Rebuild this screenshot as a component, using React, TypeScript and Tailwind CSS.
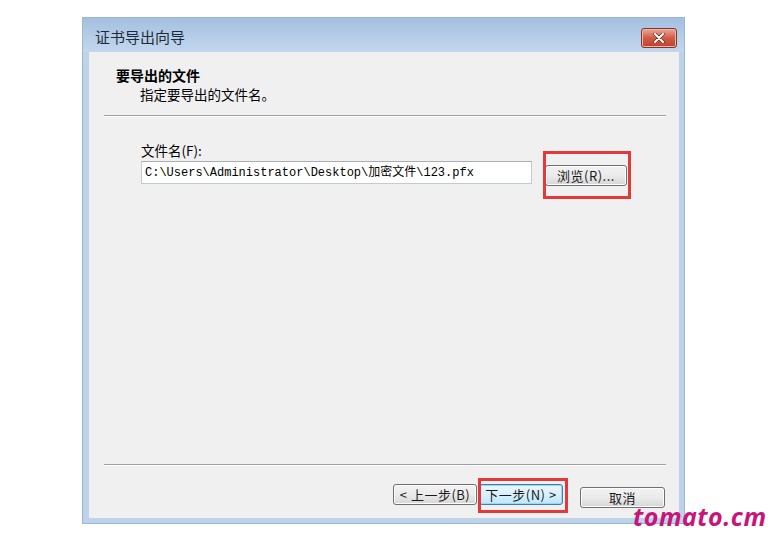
import React from "react";

const ui = { fontFamily: '"Noto Sans CJK SC", "Noto Sans", sans-serif' };
const mono = { fontFamily: '"Liberation Mono", "Noto Sans CJK SC", monospace' };

function WinButton({
  label,
  width,
  focused,
}: {
  label: string;
  width: string;
  focused?: boolean;
}) {
  return (
    <button
      className={`${width} h-[21px] whitespace-nowrap rounded-[3px] border text-[13px] leading-none tracking-[0.5px] text-[#1a1a1a] ${
        focused
          ? "border-[#3c7fb1] bg-gradient-to-b from-[#eaf6fd] via-[#d9f0fc] to-[#bee6fd] shadow-[inset_0_0_0_1px_#9fd5f5]"
          : "border-[#707070] bg-gradient-to-b from-[#f2f2f2] via-[#ebebeb] to-[#d6d6d6] shadow-[inset_0_0_0_1px_#fcfcfc]"
      }`}
      style={ui}
    >
      {label}
    </button>
  );
}

function Separator() {
  return (
    <div className="ml-[15px] mr-[13px] flex flex-col">
      <div className="h-px bg-[#a0a0a0]" />
      <div className="h-px bg-white" />
    </div>
  );
}

export default function App() {
  return (
    <div className="relative h-[542px] w-[768px] overflow-hidden bg-white">
      {/* WINDOW */}
      <div className="ml-[83px] mt-[18px] flex h-[505px] w-[601px] flex-col bg-[#bcd3ea] shadow-[0_0_0_1px_#9db6d2]">
        {/* TITLE BAR */}
        <div className="relative flex h-[34px] items-center bg-gradient-to-b from-[#a3bedf] via-[#b4cce7] to-[#c3d7ee] pl-[12px] pt-[4px]">
          <span className="text-[15px] text-[#1e2a3a]" style={ui}>
            证书导出向导
          </span>
          <div className="absolute left-[558px] top-[10px] flex h-[20px] w-[36px] items-center justify-center rounded-[3px] border border-[#80362c] bg-gradient-to-b from-[#e9a797] via-[#d05b46] to-[#c13f2a] shadow-[inset_0_0_0_1px_#eeb5a8]">
            <svg width="12" height="10" viewBox="0 0 12 10">
              <path d="M2 1 L10 9 M10 1 L2 9" stroke="#5a2a22" strokeWidth="3.2" strokeLinecap="round" />
              <path d="M2 1 L10 9 M10 1 L2 9" stroke="#ffffff" strokeWidth="2" strokeLinecap="round" />
            </svg>
          </div>
        </div>

        {/* CONTENT */}
        <div className="ml-[6px] mr-[5px] mb-[5px] flex flex-1 flex-col bg-[#f0f0f0]" style={ui}>
          {/* HEADER */}
          <div className="pl-[27px] pt-[14px]">
            <div className="text-[14px] font-bold leading-[19px] text-black">要导出的文件</div>
            <div className="pl-[24px] text-[13.5px] leading-[19px] text-black">指定要导出的文件名。</div>
          </div>
          <div className="mt-[11px]">
            <Separator />
          </div>

          {/* FILE FIELD */}
          <div className="ml-[52px] mt-[24px] text-[13.5px] leading-[18px] text-black">文件名(F):</div>
          <div className="ml-[52px] mt-[2px] flex items-start gap-[13px]">
            <div className="flex h-[23px] w-[391px] items-center border border-[#c5c9d0] border-t-[#abadb3] bg-white pl-[3px] text-[12px] text-black">
              <span style={mono}>C:\Users\Administrator\Desktop\加密文件\123.pfx</span>
            </div>
            <div className="mt-[1px]">
              <WinButton label="浏览(R)..." width="w-[82px]" />
            </div>
          </div>

          {/* FOOTER */}
          <div className="mt-auto">
            <Separator />
          </div>
          <div className="mt-[18px] mb-[10px] flex justify-end pr-[14px]">
            <div className="flex gap-[2px]">
              <WinButton label="< 上一步(B)" width="w-[84px]" />
              <WinButton label="下一步(N) >" width="w-[84px]" focused />
            </div>
            <div className="ml-[17px]">
              <WinButton label="取消" width="w-[85px]" />
            </div>
          </div>
        </div>
      </div>

      {/* HIGHLIGHT BOXES */}
      <div className="absolute left-[543px] top-[151px] h-[48px] w-[88px] border-[3px] border-[#e23a3a]" />
      <div className="absolute left-[478px] top-[478px] h-[35px] w-[90px] border-[3px] border-[#e23a3a]" />

      {/* WATERMARK */}
      <div
        className="absolute left-[633px] top-[501px] text-[25px] font-bold italic leading-[30px] tracking-[0.5px] text-[#c8157a]"
        style={{ fontFamily: '"Open Sans", "Liberation Sans", sans-serif' }}
      >
        tomato.cm
      </div>
    </div>
  );
}
